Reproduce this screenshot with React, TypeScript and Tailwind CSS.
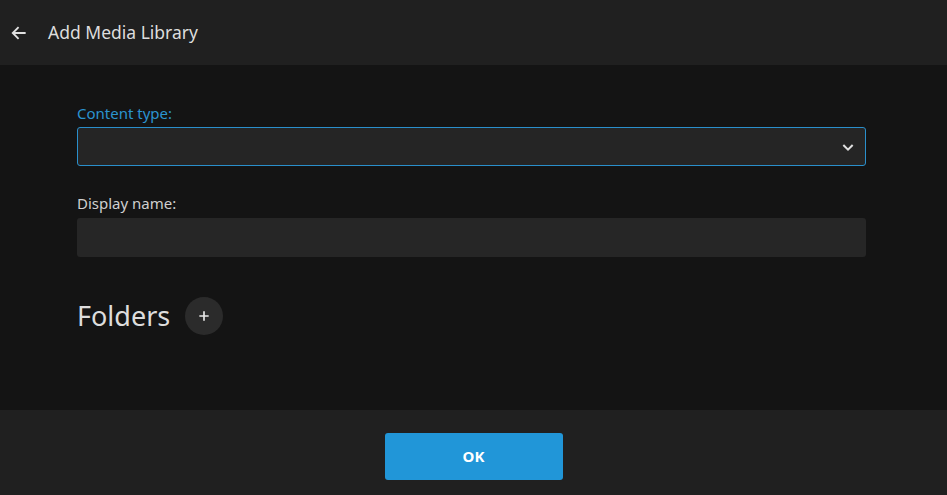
import React from 'react'

export default function App() {
	return (
		<div
			className="flex flex-col h-screen bg-[#141414] text-[#dddddd]"
			style={{ fontFamily: '"Noto Sans", "Open Sans", sans-serif' }}
		>
			{/* Header */}
			<header className="h-[65px] bg-[#202020] flex items-center shrink-0">
				<button className="ml-[9px] w-[20px] h-[20px] flex items-center justify-center text-[#e0e0e0]">
					<svg width="20" height="20" viewBox="0 0 24 24" fill="none" stroke="currentColor" strokeWidth="2.2">
						<path d="M20 12H4.5M11.5 5l-7 7 7 7" />
					</svg>
				</button>
				<h1 className="ml-[19px] text-[17.5px] text-[#dddddd] leading-none">Add Media Library</h1>
			</header>

			{/* Form */}
			<main className="flex-1 pt-[38px]">
				<div className="ml-[77px] w-[789px]">
					<label className="block text-[15px] leading-[21px] text-[#2b93cf] mb-[3px]">Content type:</label>
					<div className="h-[39px] rounded-[3px] border border-[#2a8fcb] bg-[#252525] flex items-center justify-end pr-[9px]">
						<svg width="16" height="16" viewBox="0 0 24 24" fill="none" stroke="#e0e0e0" strokeWidth="3">
							<path d="M5 9l7 7 7-7" />
						</svg>
					</div>

					<label className="block mt-[27px] text-[15px] leading-[21px] text-[#cfcfcf] mb-[4px]">Display name:</label>
					<div className="h-[39px] rounded-[3px] bg-[#262626]" />

					<div className="mt-[40px] flex items-center">
						<h2 className="text-[27px] leading-[36px] text-[#dddddd]">Folders</h2>
						<button className="ml-[15px] w-[38px] h-[38px] rounded-full bg-[#2b2b2b] flex items-center justify-center">
							<svg width="16" height="16" viewBox="0 0 24 24" fill="none" stroke="#e8e8e8" strokeWidth="2.5">
								<path d="M12 5v14M5 12h14" />
							</svg>
						</button>
					</div>
				</div>
			</main>

			{/* Footer */}
			<footer className="h-[85px] bg-[#202020] flex justify-center pt-[23px] shrink-0">
				<button className="w-[178px] h-[47px] rounded-[3px] bg-[#2196d8] text-white text-[15px] font-bold">
					OK
				</button>
			</footer>
		</div>
	)
}
